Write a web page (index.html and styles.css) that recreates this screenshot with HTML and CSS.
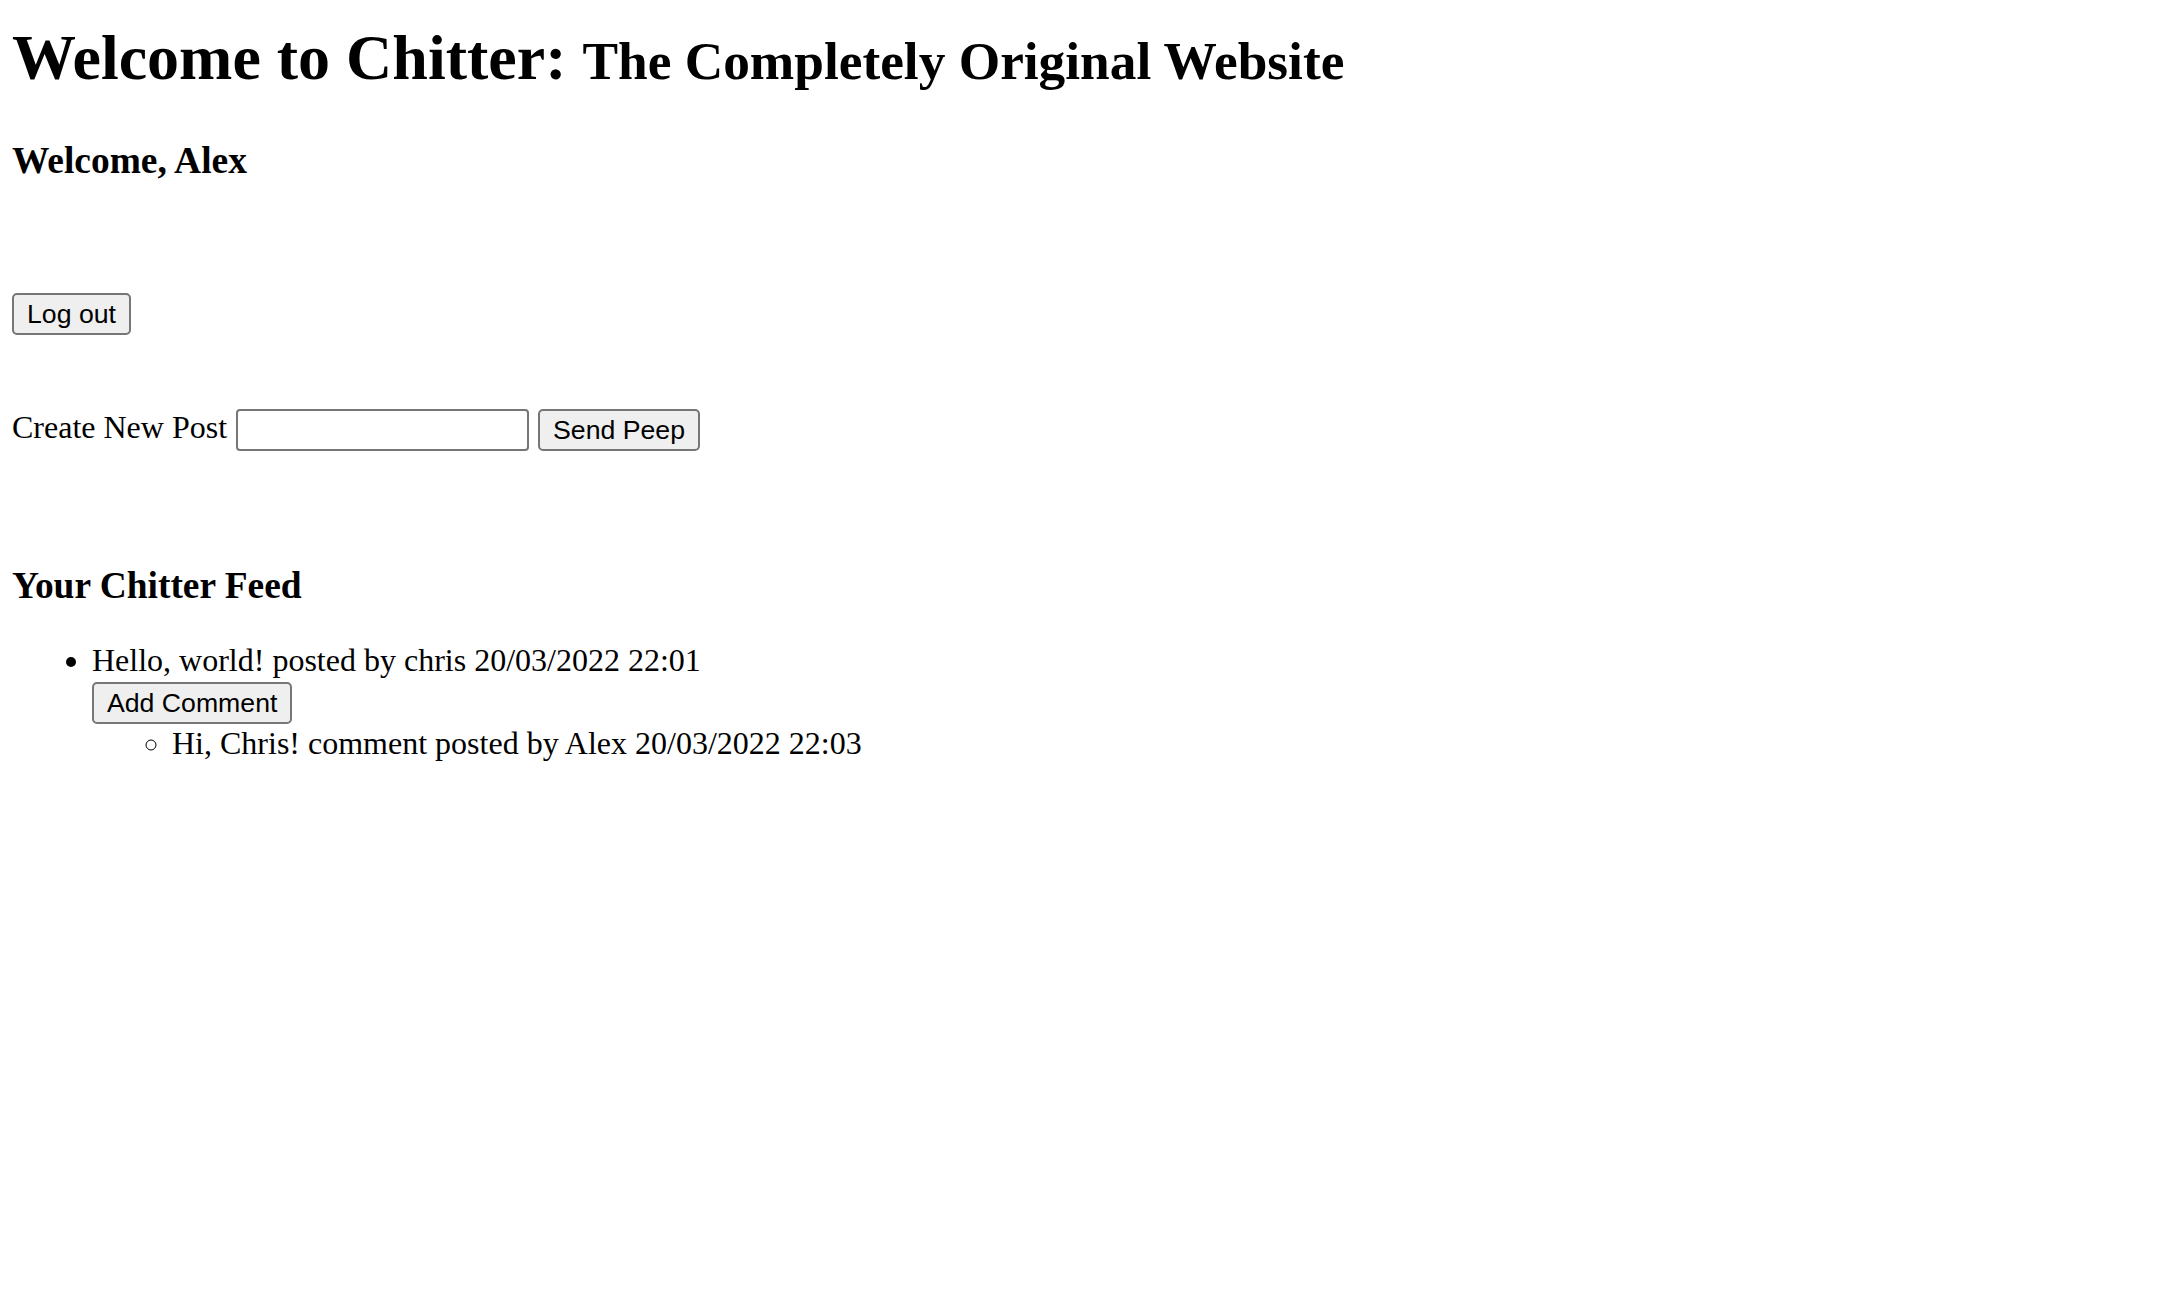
FILE: index.html
```html
<!DOCTYPE html>
<html lang="en">
<head>
<meta charset="utf-8">
<title>Chitter</title>
<link rel="stylesheet" href="styles.css">
</head>
<body class="page">
  <h1 class="title">Welcome to Chitter: <small class="subtitle">The Completely Original Website</small></h1>
  <h3 class="greeting">Welcome, Alex</h3>
  <form class="logout-form">
    <button class="btn" type="button">Log out</button>
  </form>
  <form class="post-form">
    <label class="post-label" for="peep">Create New Post</label>
    <input class="post-input" id="peep" type="text">
    <button class="btn" type="button">Send Peep</button>
  </form>
  <h3 class="feed-title">Your Chitter Feed</h3>
  <ul class="feed">
    <li class="peep">
      <div class="peep-text">Hello, world! posted by chris 20/03/2022 22:01</div>
      <form class="comment-form"><button class="btn" type="button">Add Comment</button></form>
      <ul class="comments">
        <li class="comment">Hi, Chris! comment posted by Alex 20/03/2022 22:03</li>
      </ul>
    </li>
  </ul>
</body>
</html>
```

FILE: styles.css
```css
html {
  background: #ffffff;
}

.page {
  margin: 0;
  padding: 0 12px;
  font-family: "Liberation Serif", "Times New Roman", serif;
  font-size: 32px;
  line-height: 37px;
  color: #000000;
}

.title {
  margin: 21px 0 0;
  font-size: 64px;
  line-height: 74px;
  font-weight: bold;
}

.subtitle {
  font-size: 53.33px;
  line-height: 1;
}

.greeting {
  margin: 44px 0 0;
  font-size: 37.44px;
  line-height: 44px;
  font-weight: bold;
}

.logout-form {
  display: flex;
  margin: 110px 0 0;
}

.btn {
  box-sizing: border-box;
  height: 42px;
  padding: 0 13px;
  border: 2px solid #767676;
  border-radius: 5px;
  background: #efefef;
  color: #000000;
  font-family: "Liberation Sans", Arial, sans-serif;
  font-size: 26.67px;
  line-height: 30px;
}

.post-form {
  display: flex;
  align-items: flex-start;
  gap: 9px;
  margin: 74px 0 0;
}

.post-label {
  line-height: 37px;
}

.post-input {
  box-sizing: border-box;
  width: 293px;
  height: 42px;
  margin: 0;
  padding: 0 4px;
  border: 2px solid #767676;
  border-radius: 4px;
  background: #ffffff;
  font-family: "Liberation Sans", Arial, sans-serif;
  font-size: 26.67px;
}

.feed-title {
  margin: 113px 0 0;
  font-size: 37.44px;
  line-height: 44px;
  font-weight: bold;
}

.feed {
  margin: 34px 0 0;
  padding-left: 80px;
  list-style: disc;
}

.comment-form {
  display: flex;
  margin: 3px 0 0;
}

.comments {
  margin: 1px 0 0;
  padding-left: 80px;
  list-style: circle;
}
```
